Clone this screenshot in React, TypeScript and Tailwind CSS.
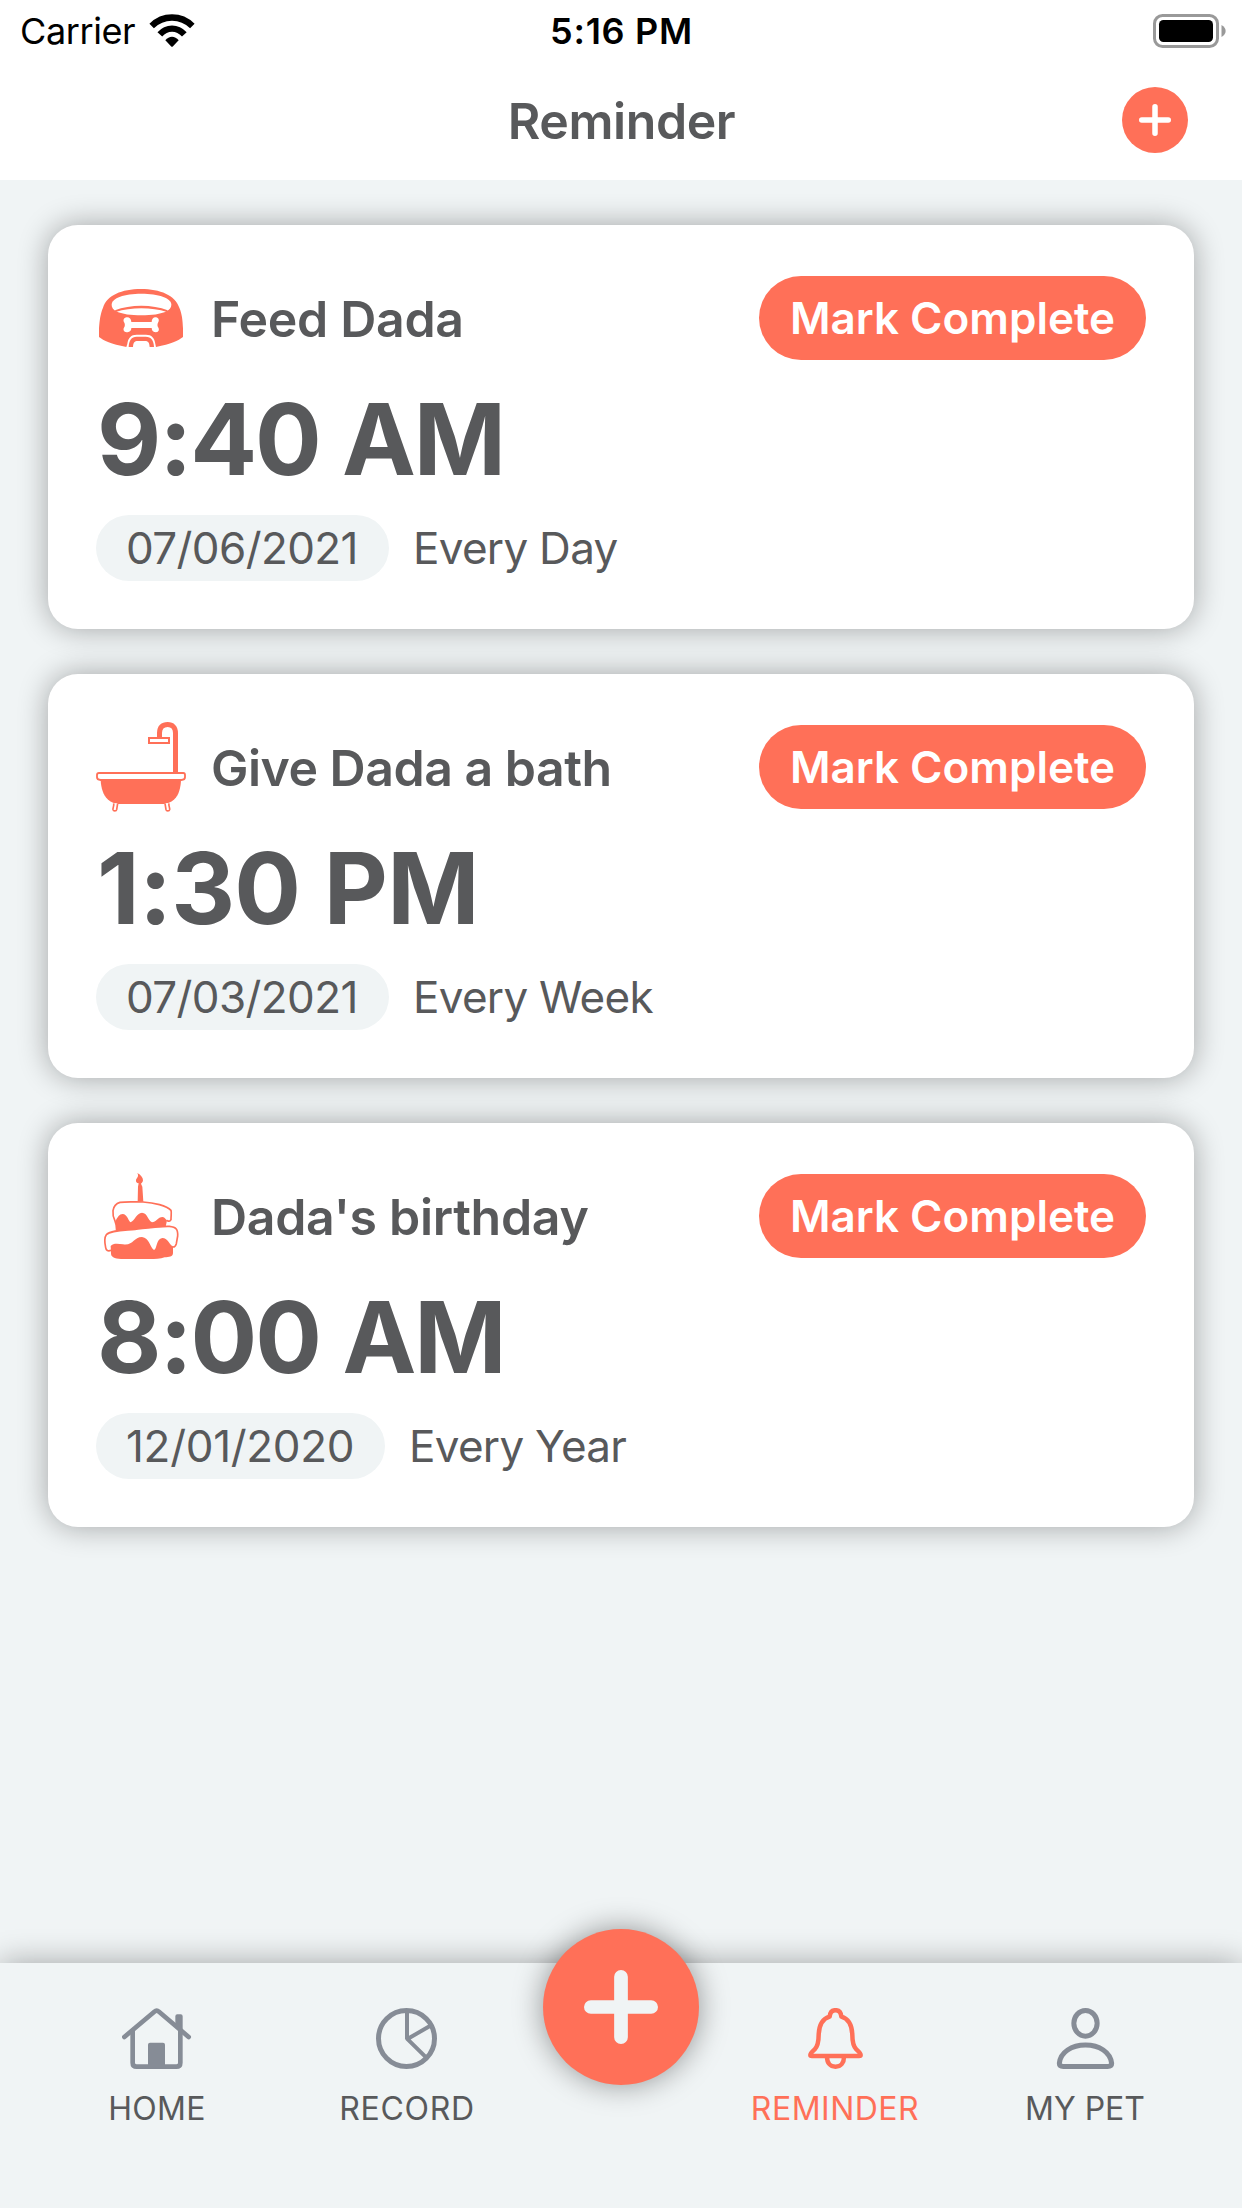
import type { ReactNode } from 'react';

function BowlIcon() {
  return (
    <svg viewBox="33 9 270 270" className="h-[90px] w-[90px] shrink-0" fill="#ff7058">
      <path d="M42 201V175C44 150 46 132 54 113C66 76 110 57 168 57C226 57 270 76 283 113C291 132 293 150 294 175V201C280 212 258 222 213 231L211 222C209 204 200 194 183 194H155C138 194 129 204 127 222L124 231C78 222 56 212 42 201Z" />
      <path fill="#fff" d="M80 104C80 84 118 71 169 71C220 71 259 84 259 104C259 112 254 118 246 123C226 133 200 136 169 136C138 136 112 133 92 123C84 118 80 112 80 104Z" />
      <path d="M90 121C135 103 203 103 248 121L246 126C200 111 138 111 92 126Z" />
      <path fill="#fff" d="M139 156H200C200 146 206 141 213 142C221 143 224 152 219 158C217 161 217 168 219 171C224 178 222 186 213 187C206 187 200 183 200 174H139C139 183 132 187 125 187C116 186 113 178 118 171C120 168 120 161 118 158C113 152 116 143 125 142C132 141 139 146 139 156Z" />
      <path d="M131 231C132 211 139 200 155 200H182C199 200 206 211 207 231H194C193 217 189 213 180 213H158C149 213 145 217 144 231Z" />
    </svg>
  );
}

function BathIcon() {
  return (
    <svg viewBox="33 36 270 270" className="h-[90px] w-[90px] shrink-0" fill="none" stroke="#ff7058">
      <path strokeWidth="15" d="M223.500 82V69C223.500 52 233 43.500 248 43.500C262 43.500 271.500 52 271.500 69V188" />
      <rect x="192" y="84" width="60" height="15" fill="#fff" strokeWidth="6" />
      <path d="M47 211H288C287 232 282 255 268 268C258 277 250 281 235 282H101C86 281 78 277 68 268C54 255 48 232 47 211Z" fill="#ff7058" stroke="none" />
      <path d="M42 189H295Q300 189 300 195V202Q300 210 289 210H47Q36 210 36 202V195Q36 189 42 189Z" fill="#fff" strokeWidth="5.500" />
      <path strokeWidth="5" strokeLinejoin="round" fill="#fff" d="M86 280C88 288 83 292 84 299C85 304 94 304 95 299L98 280" />
      <path strokeWidth="5" strokeLinejoin="round" fill="#fff" d="M240 280L243 299C244 304 253 304 254 299C255 292 250 288 252 280" />
    </svg>
  );
}

function CakeIcon() {
  return (
    <svg viewBox="33 33 270 270" className="h-[90px] w-[90px] shrink-0" fill="#ff7058">
      <path d="M157 39C168 45 174 53 174 61C174 67 169 70 168 71L172 80L175 125H158L159 80L161 70C155 69 152 65 153 60C155 54 163 50 157 39Z" />
      <path d="M91 183C98 172 103 162 113 162C126 163 128 177 136 187C150 182 154 159 171 158C188 159 187 179 201 187C213 187 218 171 233 171C240 172 240 176 246 181L242 200L95 212Z" />
      <path fill="none" stroke="#ff7058" strokeWidth="5" strokeLinejoin="round" d="M95 212C95 202 94 192 89 180C84 171 83 166 84 152C86 138 91 131 105 127C127 124 151 126 174 126C207 128 245 137 258 151C260 158 258 166 258 179C254 187 249 183 246 181" />
      <path d="M77 258C84 249 99 251 114 253C145 258 145 231 171 231C193 233 195 262 207 270C217 266 213 236 232 234C248 234 252 252 264 260V279C264 291 252 291 239 292C222 298 199 297 178 297H115C96 297 78 293 78 281Z" />
      <path fill="none" stroke="#ff7058" strokeWidth="5" strokeLinejoin="round" d="M78 271C69 275 63 271 62 263C58 244 58 232 64 224C78 210 116 211 150 208C185 204 224 198 253 199C274 201 279 208 278 228L274 251C271 261 266 263 262 259" />
    </svg>
  );
}

function HomeIcon() {
  return (
    <svg viewBox="96 84 210 183" className="h-[61px] w-[70px]" fill="none" stroke="#868c96" strokeLinecap="round" strokeLinejoin="round">
      <path strokeWidth="14" d="M103 171L193 95Q200 89 207 95L296 171" />
      <path strokeWidth="14" strokeLinecap="butt" d="M128 150V248Q128 260 140 260H259Q271 260 271 248V150" />
      <path fill="#868c96" stroke="none" d="M256 134V109Q256 103 262 103H272Q278 103 278 109V152ZM174 260V194Q174 188 180 188H219Q225 188 225 194V260Z" />
    </svg>
  );
}

function RecordIcon() {
  return (
    <svg viewBox="846 84 210 183" className="h-[61px] w-[70px]" fill="none" stroke="#868c96">
      <circle cx="949.500" cy="175.500" r="84" strokeWidth="15" />
      <path strokeWidth="12" strokeLinejoin="bevel" d="M951 92V178L1021 137M951 176L1009 233" />
    </svg>
  );
}

function BellIcon() {
  return (
    <svg viewBox="240 84 210 183" className="h-[61px] w-[70px]" fill="none" stroke="#ff7058" strokeWidth="13.500" strokeLinejoin="round">
      <path d="M329 110C330 97 336 90.500 346.500 90.500C357 90.500 363 97 364 110C389 117 396 138 397 165C397 187 400 199 409 208C418 216 422 221 422 225Q422 228 417 228H276Q271 228 271 225C271 221 275 216 284 208C293 199 296 187 296 165C297 138 304 117 329 110Z" />
      <path d="M321 230C321 248 330 260 346.500 260C363 260 372 248 372 230" />
    </svg>
  );
}

function PersonIcon() {
  return (
    <svg viewBox="990 84 210 183" className="h-[61px] w-[70px]" fill="none" stroke="#868c96" strokeWidth="15" strokeLinejoin="round">
      <ellipse cx="1096.500" cy="130" rx="35" ry="38.500" />
      <path d="M1030 259.500Q1018 259.500 1018 250C1021 217 1055 195 1096.500 195C1138 195 1171 217 1175 250Q1175 259.500 1163 259.500Z" />
    </svg>
  );
}

function WifiIcon() {
  return (
    <svg viewBox="447 39 138 99" className="-mt-[2px] h-[33px] w-[46px]" fill="none" stroke="#000">
      <path strokeWidth="19" d="M455 75C489 41 543 41 577 75" />
      <path strokeWidth="19" d="M479.500 100C500 77 532 77 553 100" />
      <path fill="#000" stroke="none" d="M496 118C507 104 525 104 536 118L519 136Q516 139 513 136Z" />
    </svg>
  );
}

const reminders: { icon: ReactNode; title: string; titleClass: string; time: string; timeClass: string; date: string; dateClass: string; repeat: string }[] = [
  { icon: <BowlIcon />, title: 'Feed Dada', titleClass: 'tracking-[-0.3px]', time: '9:40 AM', timeClass: 'tracking-[-2.1px]', date: '07/06/2021', dateClass: 'w-[293px] tracking-[-0.6px]', repeat: 'Every Day' },
  { icon: <BathIcon />, title: 'Give Dada a bath', titleClass: 'tracking-[-0.5px]', time: '1:30 PM', timeClass: 'tracking-[-0.8px]', date: '07/03/2021', dateClass: 'w-[293px] tracking-[-0.6px]', repeat: 'Every Week' },
  { icon: <CakeIcon />, title: "Dada's birthday", titleClass: 'tracking-[-0.3px]', time: '8:00 AM', timeClass: 'tracking-[-2px]', date: '12/01/2020', dateClass: 'w-[289px] tracking-[-0.3px]', repeat: 'Every Year' },
];

function NavItem({ icon, label, className }: { icon: ReactNode; label: string; className: string }) {
  return (
    <button className="flex w-[250px] flex-col items-center">
      {icon}
      <span className={`mt-[19px] text-[32px] leading-[42px] ${className}`}>{label}</span>
    </button>
  );
}

export default function App() {
  return (
    <div className="flex h-[2208px] w-[1242px] flex-col overflow-hidden bg-[#f0f4f5] font-['Inter','Liberation_Sans',sans-serif] text-[#58595b]">
      <header className="bg-white">
        <div className="grid h-[60px] grid-cols-3 items-center pr-4 pl-5 text-black">
          <div className="flex items-center gap-[14px] text-[36px] leading-[62px] tracking-[-0.4px]">
            Carrier
            <WifiIcon />
          </div>
          <div className="pr-[3px] text-center text-[36px] leading-[60px] font-semibold tracking-[0.7px] whitespace-nowrap">5:16 PM</div>
          <svg viewBox="0 0 74 34" className="h-[34px] w-[74px] justify-self-end">
            <rect x="2.500" y="1.500" width="63" height="31" rx="8" fill="none" stroke="#999" strokeWidth="3" />
            <rect x="7" y="6" width="54" height="22" rx="4.500" />
            <path fill="#999" d="M69.500 11V23C75 20 75 14 69.500 11Z" />
          </svg>
        </div>
        <div className="grid h-[120px] grid-cols-3 items-center px-[54px]">
          <h1 className="col-start-2 pt-px pl-px text-center text-[50px] leading-[60px] font-semibold tracking-[-0.4px]">Reminder</h1>
          <button className="flex h-[66px] w-[66px] items-center justify-center justify-self-end rounded-full bg-[#ff7058]">
            <svg viewBox="0 0 32 32" className="h-8 w-8" stroke="#fff" strokeWidth="5.500" strokeLinecap="round">
              <path d="M16 2.750V29.250M2.750 16H29.250" />
            </svg>
          </button>
        </div>
      </header>

      <main className="flex flex-1 flex-col gap-[45px] px-12 pt-[45px]">
        {reminders.map((r) => (
          <article key={r.title} className="h-[404px] rounded-[30px] bg-white p-12 shadow-[0_0_30px_rgba(0,0,0,0.33)]">
            <div className="flex h-[90px] items-center">
              {r.icon}
              <h2 className={`ml-[25px] flex-1 pt-px text-[50px] leading-[60px] font-semibold whitespace-nowrap ${r.titleClass}`}>{r.title}</h2>
              <button className="h-[84px] w-[387px] rounded-full bg-[#ff7058] text-[44px] leading-[84px] font-semibold text-white">Mark Complete</button>
            </div>
            <div className={`pl-px text-[99px] leading-[152px] font-bold [word-spacing:1px] ${r.timeClass}`}>{r.time}</div>
            <div className="flex items-center text-[44px] leading-[66px]">
              <span className={`rounded-full bg-[#f0f4f5] pl-[30px] ${r.dateClass}`}>{r.date}</span>
              <span className="ml-6 tracking-[-0.7px]">{r.repeat}</span>
            </div>
          </article>
        ))}
      </main>

      <nav className="flex h-[245px] items-start justify-center bg-[#f0f4f5] pt-[45px] shadow-[0_0_30px_rgba(0,0,0,0.33)]">
        <NavItem icon={<HomeIcon />} label="HOME" className="tracking-[0.3px]" />
        <NavItem icon={<RecordIcon />} label="RECORD" className="tracking-[0.7px]" />
        <button className="mx-[11px] -mt-[79px] flex h-[156px] w-[156px] shrink-0 items-center justify-center rounded-full bg-[#ff7058] shadow-[0_0_30px_rgba(0,0,0,0.4)]">
          <svg viewBox="0 0 74 74" className="h-[74px] w-[74px]" stroke="#f0f4f5" strokeWidth="13.700" strokeLinecap="round">
            <path d="M37 6.850V67.150M6.850 37H67.150" />
          </svg>
        </button>
        <NavItem icon={<BellIcon />} label="REMINDER" className="tracking-[0.5px] text-[#ff7058]" />
        <NavItem icon={<PersonIcon />} label="MY PET" className="tracking-[0px]" />
      </nav>
    </div>
  );
}
